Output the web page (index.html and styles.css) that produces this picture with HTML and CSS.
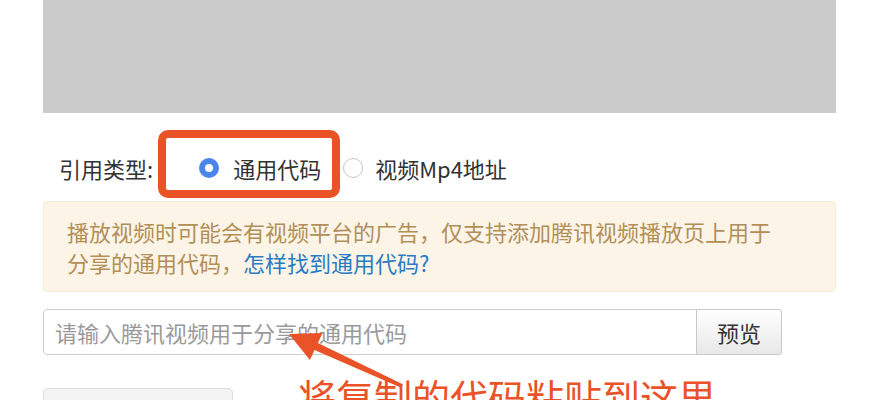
FILE: index.html
```html
<!DOCTYPE html>
<html lang="zh-CN">
<head>
  <meta charset="UTF-8">
  <title>插入视频</title>
  <link rel="stylesheet" href="styles.css">
</head>
<body>
  <div class="page">
    <div class="player"></div>

    <!-- 引用类型 -->
    <div class="type-row">
      <span class="type-label">引用类型:</span>
      <label class="option first"><span class="radio checked"></span>通用代码</label>
      <label class="option"><span class="radio"></span>视频Mp4地址</label>
    </div>

    <div class="tip">
      播放视频时可能会有视频平台的广告，仅支持添加腾讯视频播放页上用于分享的通用代码，<a href="#">怎样找到通用代码?</a>
    </div>

    <div class="input-row">
      <input class="code-input" type="text" placeholder="请输入腾讯视频用于分享的通用代码">
      <button class="preview-btn">预览</button>
    </div>

    <div class="bottom-row">
      <button class="cancel-btn"></button>
    </div>
  </div>

  <!-- annotations -->
  <div class="mark-box"></div>
  <div class="mark-note">将复制的代码粘贴到这里</div>
  <svg class="mark-arrow" width="881" height="400" viewBox="0 0 881 400">
    <polygon fill="#ea5228" points="289,334 322.5,332.9 317.9,342.9 402.8,384.2 401.2,387.8 314.5,350.1 309.9,360.1"/>
  </svg>
</body>
</html>
```

FILE: styles.css
```css
body {
  margin: 0;
  position: relative;
  height: 400px;
  overflow: hidden;
  font-family: "Noto Sans CJK SC", "Liberation Sans", sans-serif;
  color: #333;
  background: #fff;
}

.page {
  width: 793px;
  margin-left: 43px;
}

.player {
  height: 113px;
  background-color: #cbcbcb;
}

.type-row {
  display: flex;
  align-items: center;
  height: 34px;
  margin-top: 38px;
  padding-left: 16px;
  font-size: 22px;
}

.option {
  display: flex;
  align-items: center;
}

.option.first {
  margin-left: 46px;
  margin-right: 22px;
}

.radio {
  box-sizing: border-box;
  width: 20px;
  height: 20px;
  border-radius: 50%;
  border: 1px solid #c6c6c6;
  background: #fff;
  margin-right: 12px;
}

.radio.checked {
  border: 6px solid #4a86e8;
}

.option.first .radio {
  margin-right: 14px;
}

.tip {
  margin-top: 16px;
  padding: 14px 45px 13px 23px;
  background-color: #fcf5e7;
  border: 1px solid #f6ebd6;
  border-radius: 4px;
  color: #b28f57;
  font-size: 22px;
  line-height: 31px;
}

.tip a {
  color: #2b7bc4;
  text-decoration: none;
}

.input-row {
  display: flex;
  margin-top: 17px;
  height: 46px;
}

.code-input {
  box-sizing: border-box;
  width: 654px;
  height: 46px;
  padding: 0 11px;
  border: 1px solid #cfcfcf;
  border-radius: 4px 0 0 4px;
  font-family: inherit;
  font-size: 22px;
  color: #333;
  outline: none;
}

.code-input::placeholder {
  color: #9a9a9a;
}

.preview-btn {
  box-sizing: border-box;
  width: 86px;
  height: 46px;
  margin-left: -1px;
  border: 1px solid #c9c9c9;
  border-radius: 0 3px 3px 0;
  background: linear-gradient(#ffffff, #e8e8e8);
  font-family: inherit;
  font-size: 22px;
  color: #333;
}

.bottom-row {
  margin-top: 33px;
}

.cancel-btn {
  box-sizing: border-box;
  width: 190px;
  height: 46px;
  border: 1px solid #dcdcdc;
  border-radius: 5px;
  background: #f3f3f3;
}

.mark-box {
  position: absolute;
  left: 158px;
  top: 130px;
  width: 182px;
  height: 68px;
  box-sizing: border-box;
  border: 8px solid #ea5228;
  border-radius: 10px;
}

.mark-note {
  position: absolute;
  left: 298px;
  top: 377px;
  font-size: 38px;
  line-height: 1;
  color: #ea5228;
  white-space: nowrap;
}

.mark-arrow {
  position: absolute;
  left: 0;
  top: 0;
  pointer-events: none;
}
```
